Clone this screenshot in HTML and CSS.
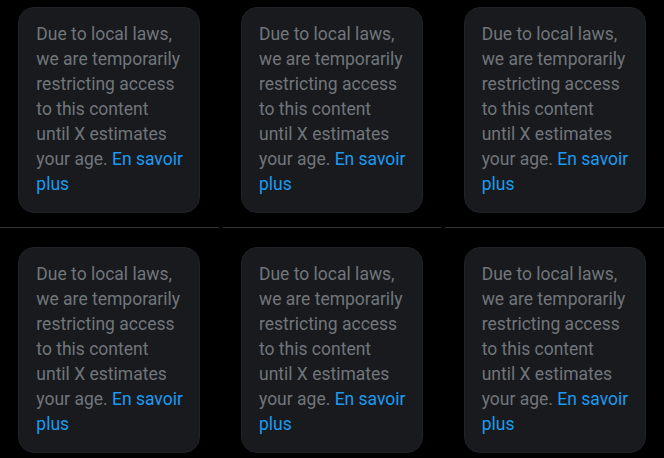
FILE: index.html
```html
<!DOCTYPE html>
<html lang="en">
<head>
  <meta charset="UTF-8" />
  <meta name="viewport" content="width=device-width, initial-scale=1.0" />
  <title>Media grid</title>
  <link rel="stylesheet" href="styles.css">
</head>
<body>
  <div class="grid">
    <div class="cell">
      <div class="notice">Due to local laws,<br>we are temporarily<br>restricting access<br>to this content<br>until X estimates<br>your age. <a href="#">En savoir<br>plus</a></div>
    </div>
    <div class="cell">
      <div class="notice">Due to local laws,<br>we are temporarily<br>restricting access<br>to this content<br>until X estimates<br>your age. <a href="#">En savoir<br>plus</a></div>
    </div>
    <div class="cell">
      <div class="notice">Due to local laws,<br>we are temporarily<br>restricting access<br>to this content<br>until X estimates<br>your age. <a href="#">En savoir<br>plus</a></div>
    </div>
    <div class="cell">
      <div class="notice">Due to local laws,<br>we are temporarily<br>restricting access<br>to this content<br>until X estimates<br>your age. <a href="#">En savoir<br>plus</a></div>
    </div>
    <div class="cell">
      <div class="notice">Due to local laws,<br>we are temporarily<br>restricting access<br>to this content<br>until X estimates<br>your age. <a href="#">En savoir<br>plus</a></div>
    </div>
    <div class="cell">
      <div class="notice">Due to local laws,<br>we are temporarily<br>restricting access<br>to this content<br>until X estimates<br>your age. <a href="#">En savoir<br>plus</a></div>
    </div>
  </div>
</body>
</html>
```

FILE: styles.css
```css
html, body {
  margin: 0;
  padding: 0;
  background-color: #000;
  font-family: Roboto, "Liberation Sans", sans-serif;
  overflow: hidden;
}

.grid {
  display: grid;
  grid-template-columns: repeat(3, 1fr);
  column-gap: 4px;
  margin-top: -12px;
}

.cell {
  display: flex;
  justify-content: center;
  padding: 19px 0 14px;
  border-bottom: 1px solid #2f3336;
}

.notice {
  width: 182px;
  box-sizing: border-box;
  padding: 14px 12px 15px 17px;
  background: #181a1e;
  border: 1px solid #1f2226;
  border-radius: 16px;
  color: #71767b;
  font-size: 17.5px;
  line-height: 25px;
  white-space: nowrap;
}

.notice a {
  color: #1d9bf0;
  text-decoration: none;
}
```
